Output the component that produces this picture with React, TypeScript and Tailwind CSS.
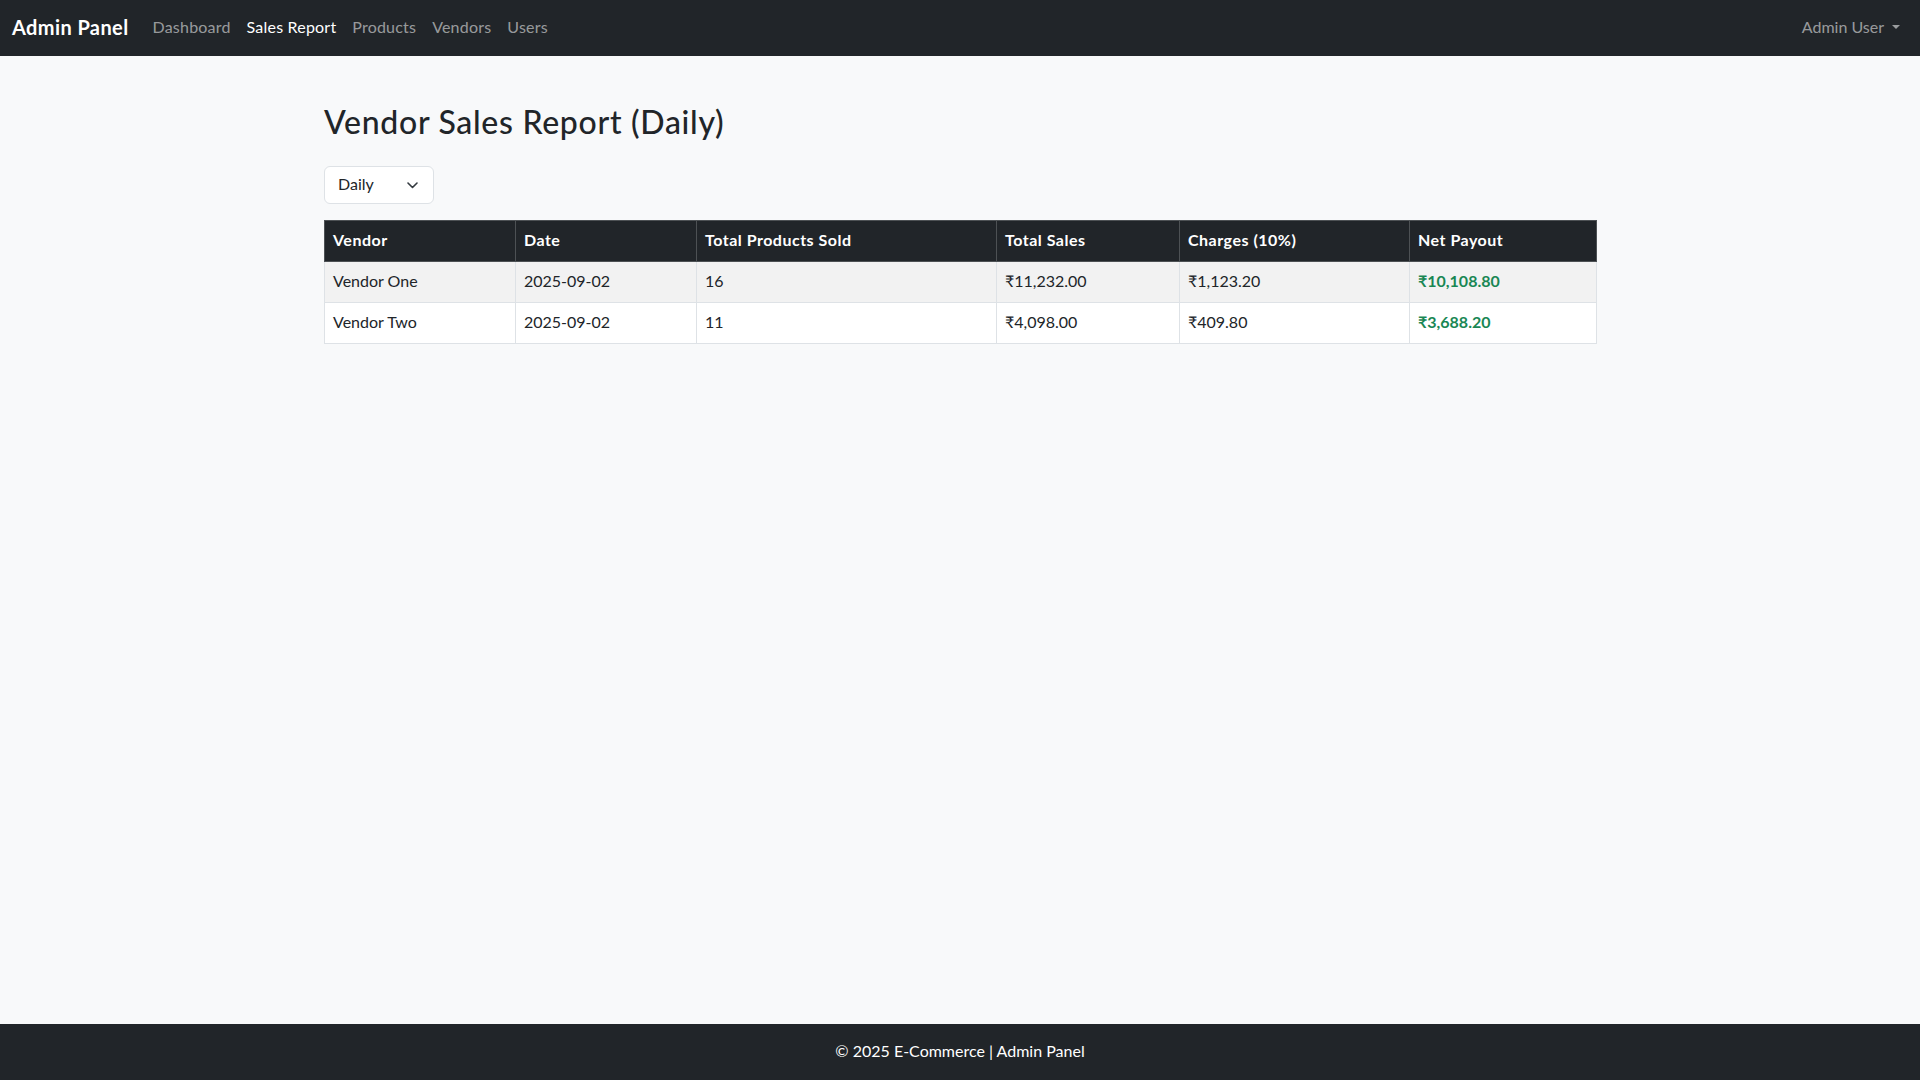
import React from "react";

const rows = [
  { vendor: "Vendor One", date: "2025-09-02", sold: "16", sales: "₹11,232.00", charges: "₹1,123.20", net: "₹10,108.80" },
  { vendor: "Vendor Two", date: "2025-09-02", sold: "11", sales: "₹4,098.00", charges: "₹409.80", net: "₹3,688.20" },
];

const cols = [
  { label: "Vendor", w: "w-[191px]" },
  { label: "Date", w: "w-[181px]" },
  { label: "Total Products Sold", w: "w-[300px]" },
  { label: "Total Sales", w: "w-[183px]" },
  { label: "Charges (10%)", w: "w-[230px]" },
  { label: "Net Payout", w: "w-[187px]" },
];

export default function App() {
  return (
    <div className="min-h-screen flex flex-col bg-[#f8f9fa] font-['Lato','Liberation_Sans',sans-serif] text-[#212529] text-[16px] leading-6">
      <nav className="h-[56px] bg-[#212529] px-3 flex items-center justify-between">
        <div className="flex items-center -mt-[2px]">
          <span className="text-white font-bold text-[20px] tracking-[0.4px] mr-[16px]">Admin Panel</span>
          <div className="flex items-center tracking-[0.2px]">
            <a className="px-2 text-[rgba(255,255,255,0.55)]">Dashboard</a>
            <a className="px-2 text-white">Sales Report</a>
            <a className="px-2 text-[rgba(255,255,255,0.55)]">Products</a>
            <a className="px-2 text-[rgba(255,255,255,0.55)]">Vendors</a>
            <a className="px-2 text-[rgba(255,255,255,0.55)]">Users</a>
          </div>
        </div>
        <a className="px-2 -mt-[2px] flex items-center text-[rgba(255,255,255,0.55)]">
          Admin User
          <span className="ml-[8px] w-0 h-0 border-l-[4px] border-r-[4px] border-t-[4px] border-l-transparent border-r-transparent border-t-[rgba(255,255,255,0.55)]" />
        </a>
      </nav>

      <main className="flex-1">
        <div className="ml-[324px] w-[1272px] pt-[48px]">
          <h2 className="text-[32px] leading-[38.4px] font-medium tracking-[0.7px] mb-[24px] -translate-y-[1px]">Vendor Sales Report (Daily)</h2>
          <div className="mb-[16px]">
            <div className="w-[110px] h-[38px] bg-white border border-[#dee2e6] rounded-[6px] flex items-center justify-between pl-[13px] pr-[15px]">
              <span className="-mt-[2px]">Daily</span>
              <svg width="11" height="7" viewBox="0 0 11 7" fill="none">
                <path d="M1 1l4.5 4.5L10 1" stroke="#343a40" strokeWidth="1.6" strokeLinecap="round" strokeLinejoin="round" />
              </svg>
            </div>
          </div>
          <table className="w-[1272px] border-collapse table-fixed">
            <thead>
              <tr className="bg-[#212529] text-white">
                {cols.map((c) => (
                  <th key={c.label} className={`${c.w} text-left font-bold tracking-[0.5px] px-2 pt-[7px] pb-[9px] border border-[#4d5154]`}>
                    {c.label}
                  </th>
                ))}
              </tr>
            </thead>
            <tbody>
              {rows.map((r, i) => (
                <tr key={r.vendor} className={i % 2 === 0 ? "bg-[#f2f2f2]" : "bg-white"}>
                  <td className="px-2 pt-[7px] pb-[9px] border border-[#dee2e6]">{r.vendor}</td>
                  <td className="px-2 pt-[7px] pb-[9px] border border-[#dee2e6]">{r.date}</td>
                  <td className="px-2 pt-[7px] pb-[9px] border border-[#dee2e6]">{r.sold}</td>
                  <td className="px-2 pt-[7px] pb-[9px] border border-[#dee2e6]">{r.sales}</td>
                  <td className="px-2 pt-[7px] pb-[9px] border border-[#dee2e6]">{r.charges}</td>
                  <td className="px-2 pt-[7px] pb-[9px] border border-[#dee2e6] font-bold text-[#198754]">{r.net}</td>
                </tr>
              ))}
            </tbody>
          </table>
        </div>
      </main>

      <footer className="h-[56px] bg-[#212529] text-white flex items-center justify-center">
        <span className="-mt-[2px]">© 2025 E-Commerce | Admin Panel</span>
      </footer>
    </div>
  );
}
